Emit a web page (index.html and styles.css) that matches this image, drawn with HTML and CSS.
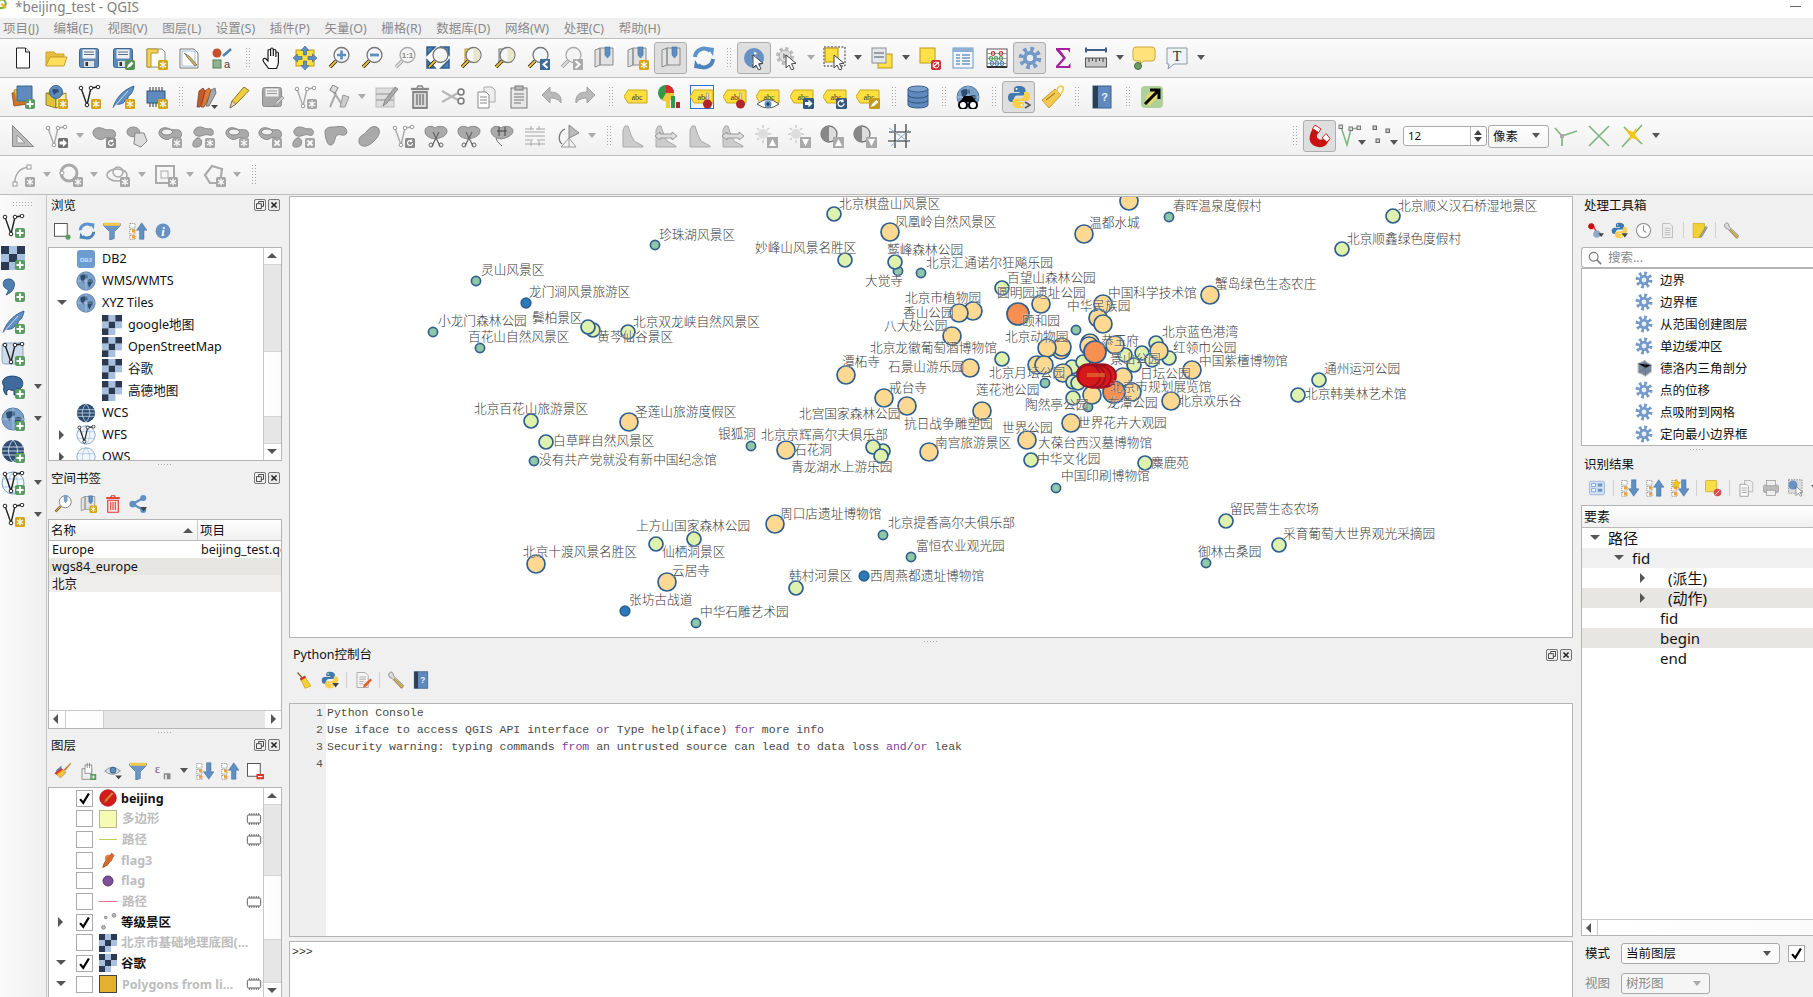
FILE: index.html
```html
<!DOCTYPE html>
<html lang="zh-CN">
<head>
<meta charset="utf-8">
<title>*beijing_test - QGIS</title>
<link rel="stylesheet" href="styles.css">
</head>
<body>
<svg class="defs" aria-hidden="true">
<defs>
<!-- badges: drawn in the lower right corner of a 24 box -->
<symbol id="bS" viewBox="0 0 24 24"><rect x="14" y="14" width="10" height="10" rx="1.5" fill="#d4a617"/><path d="M19 15.5v7M16 17l6 4M22 17l-6 4" stroke="#fff" stroke-width="1.2"/></symbol>
<symbol id="bP" viewBox="0 0 24 24"><rect x="14" y="14" width="10" height="10" rx="2" fill="#5a9a63"/><path d="M19 15.5v7M15.5 19h7" stroke="#fff" stroke-width="2"/></symbol>
<symbol id="gS" viewBox="0 0 24 24"><rect x="14" y="14" width="10" height="10" rx="1.5" fill="#a6a6a6"/><path d="M19 15.5v7M16 17l6 4M22 17l-6 4" stroke="#fff" stroke-width="1.2"/></symbol>
<symbol id="gX" viewBox="0 0 24 24"><rect x="14" y="14" width="10" height="10" rx="1.5" fill="#a6a6a6"/><path d="M16.5 16.5l5 5M21.5 16.5l-5 5" stroke="#fff" stroke-width="1.8"/></symbol>
<symbol id="gR" viewBox="0 0 24 24"><rect x="14" y="14" width="10" height="10" rx="1.5" fill="#8a8a8a"/><path d="M21.5 19a2.5 2.5 0 1 1-1-2M20 15.5l.8 1.7-1.8.5" fill="none" stroke="#fff" stroke-width="1.2"/></symbol>
<symbol id="gA" viewBox="0 0 24 24"><rect x="14" y="14" width="10" height="10" rx="1.5" fill="#6f6f6f"/><path d="M15.5 17.5h3.500v-2.500l4 4-4 4v-2.500h-3.500z" fill="#fff"/></symbol>
<!-- project -->
<symbol id="new" viewBox="0 0 24 24"><path d="M5.500 2h9l4 4v16h-13z" fill="#fff" stroke="#222"/><path d="M14.500 2v4h4" fill="#eee" stroke="#222"/></symbol>
<symbol id="open" viewBox="0 0 24 24"><path d="M2 20V6h8l2 2h8v3H6l-4 9z" fill="#e9bf3c" stroke="#caa02c"/><path d="M2 20l4-9h17l-3 9z" fill="#ffde5c" stroke="#caa02c"/></symbol>
<symbol id="save" viewBox="0 0 24 24"><rect x="2.500" y="2.500" width="19" height="19" rx="2" fill="#5f89b5" stroke="#3f668f"/><rect x="5.500" y="3.500" width="13" height="9" fill="#eef1f4"/><path d="M7 6h10M7 8.500h10" stroke="#5a6f86"/><rect x="7" y="15" width="10" height="6" fill="#dfe3e7"/><rect x="8.500" y="16" width="2.500" height="4" fill="#333"/></symbol>
<symbol id="pen" viewBox="0 0 24 24"><rect x="14" y="14" width="10" height="10" rx="2" fill="#53914f"/><path d="M16 22l1-3 3.500-3.500 2 2L19 21z" fill="#fff"/></symbol>
<symbol id="layout" viewBox="0 0 24 24"><path d="M3 3h15l3 3v15H3z" fill="#fff" stroke="#888"/><path d="M3 3h11v4H7v14H3z" fill="#f2d25a" stroke="#b9962c"/></symbol>
<symbol id="mgr" viewBox="0 0 24 24"><path d="M3 3h14l4 4v15H3z" fill="#fff" stroke="#777"/><rect x="5" y="5" width="13" height="15" fill="none" stroke="#a8bdd8"/><path d="M7 7l2 2 1 2 8 9 2-1-8-9-2-1z" fill="#d6b34f" stroke="#666" stroke-width=".8"/></symbol>
<symbol id="style" viewBox="0 0 24 24"><circle cx="7" cy="7" r="4.500" fill="#c4502c"/><path d="M13 10l8-7" stroke="#4f82b8" stroke-width="2.600"/><rect x="3" y="14" width="8" height="8" fill="#8db48f" stroke="#55805a"/><text x="14" y="22" class="ic-t">a</text></symbol>
<symbol id="hand" viewBox="0 0 24 24"><path d="M8.500 22.500C6.500 19 3 16.500 3 14c0-2 2.300-2 3.200-1L8 15V5c0-2 2.600-2 2.600 0v5V3.500c0-2 2.700-2 2.700 0V10V5c0-2 2.600-2 2.600 0v6V7.500c0-2 2.500-2 2.500 0V16c0 3-1 4.500-2 6.500z" fill="#fff" stroke="#1c1c1c" stroke-width="1.200"/></symbol>
<symbol id="panto" viewBox="0 0 24 24"><rect x="3" y="4" width="18" height="16" fill="#ffdf3f" stroke="#b99a18"/><path d="M12 0l4 4.500h-2.500V9h-3V4.500H8zM12 24l4-4.500h-2.500V15h-3v4.500H8zM0 12l4.500-4v2.500H9v3H4.500V16zM24 12l-4.500-4v2.500H15v3h4.500V16z" fill="#5d8fc0" stroke="#37638f" stroke-width=".6"/></symbol>
<symbol id="lens" viewBox="0 0 24 24"><path d="M9 15l-6 6" stroke="#222" stroke-width="3.600"/><path d="M9 15l-6 6" stroke="#f2c230" stroke-width="1.800"/><circle cx="14.500" cy="9" r="7.500" fill="#f4f6f8" stroke="#777" stroke-width="1.300"/></symbol>
<symbol id="glens" viewBox="0 0 24 24"><path d="M9 15l-6 6" stroke="#999" stroke-width="3.600"/><path d="M9 15l-6 6" stroke="#ddd" stroke-width="1.800"/><circle cx="14.500" cy="9" r="7.500" fill="#f4f4f4" stroke="#aaa" stroke-width="1.300"/></symbol>
<symbol id="zp" viewBox="0 0 24 24"><path d="M14.500 4.500v9M10 9h9" stroke="#5d8fc0" stroke-width="2.600"/></symbol>
<symbol id="zm" viewBox="0 0 24 24"><path d="M10 9h9" stroke="#5d8fc0" stroke-width="2.800"/></symbol>
<symbol id="zfull" viewBox="0 0 24 24"><rect x="1" y="1" width="22" height="21" fill="#fff"/><path d="M1 1h8L1 9zM23 1h-8l8 8zM1 22h8l-8-8zM23 22h-8l8-8z" fill="#4d82b6" stroke="#2f5f8f" stroke-width="1.500"/></symbol>
<symbol id="half" viewBox="0 0 24 24"><path d="M14.500 2a7 7 0 0 1 0 14z" fill="#e8e6c8"/></symbol>
<symbol id="bL" viewBox="0 0 24 24"><rect x="14" y="13" width="10" height="11" fill="#3d6b9c"/><path d="M21.500 15l-4 3.500 4 3.500" fill="none" stroke="#fff" stroke-width="2"/></symbol>
<symbol id="bR" viewBox="0 0 24 24"><rect x="14" y="13" width="10" height="11" fill="#aaa"/><path d="M16.500 15l4 3.500-4 3.500" fill="none" stroke="#fff" stroke-width="2"/></symbol>
<symbol id="book" viewBox="0 0 24 24"><path d="M3 4l5-2v17l-5 2zM8 2h13v17H8z" fill="#e2e2e2" stroke="#8a8a8a"/><path d="M13 1h5v8l-2.500 3L13 9z" fill="#5d8fc0" stroke="#3d6b9c" stroke-width=".6"/></symbol>
<symbol id="refresh" viewBox="0 0 24 24"><path d="M3 11a9 9 0 0 1 15-6" fill="none" stroke="#5d94cc" stroke-width="4"/><path d="M15 1l7 1-1 8z" fill="#5d94cc"/><path d="M21 13a9 9 0 0 1-15 6" fill="none" stroke="#4d84bc" stroke-width="4"/><path d="M9 23l-7-1 1-8z" fill="#4d84bc"/></symbol>
<symbol id="info" viewBox="0 0 24 24"><circle cx="12" cy="12" r="10" fill="#6792c3"/><text x="12" y="18" class="ic-i">i</text></symbol>
<symbol id="cur" viewBox="0 0 24 24"><path d="M11 9l0 13 3-3 2.500 5 2.500-1.200-2.500-5 4.500-.5z" fill="#fff" stroke="#333" stroke-width=".9"/></symbol>
<symbol id="ggear" viewBox="0 0 24 24"><circle cx="10" cy="10" r="7" fill="none" stroke="#bbb" stroke-width="4" stroke-dasharray="3 2.500"/><circle cx="10" cy="10" r="6" fill="#ddd" stroke="#aaa"/><path d="M8 7l5 3-5 3z" fill="#999"/></symbol>
<symbol id="sel" viewBox="0 0 24 24"><rect x="1" y="1" width="21" height="19" fill="none" stroke="#333" stroke-dasharray="2 1.500"/><rect x="2" y="2" width="13" height="14" fill="#ffdf3f" stroke="#a88f1d"/></symbol>
<symbol id="form" viewBox="0 0 24 24"><rect x="8" y="8" width="14" height="14" fill="#ffe04a" stroke="#b99a18"/><rect x="2" y="2" width="14" height="15" fill="#e5e7ea" stroke="#8a8f96"/><path d="M4 7h10M4 11h10" stroke="#7d8690" stroke-width="1.500"/></symbol>
<symbol id="desel" viewBox="0 0 24 24"><rect x="2" y="2" width="15" height="15" fill="#ffe04a" stroke="#b99a18"/><rect x="13" y="14" width="10" height="10" rx="2" fill="#d3262e"/><path d="M15 21l6-5" stroke="#fff" stroke-width="1.500"/><circle cx="18" cy="19" r="3" fill="none" stroke="#fff"/></symbol>
<symbol id="table" viewBox="0 0 24 24"><rect x="2" y="2" width="20" height="20" fill="#f4f7fb" stroke="#6d97c4"/><rect x="2" y="2" width="20" height="4" fill="#8fb0d4"/><path d="M5 9h4M11 9h8M5 12h4M11 12h8M5 15h4M11 15h8M5 18h4M11 18h8" stroke="#6d97c4" stroke-width="1.500"/></symbol>
<symbol id="calc" viewBox="0 0 24 24"><rect x="2" y="3" width="20" height="18" fill="#fff" stroke="#555"/><path d="M2 21h20" stroke="#333" stroke-width="2"/><path d="M2 7.500h20M2 12.500h20M2 17.500h20" stroke="#888" stroke-width=".8"/><g fill="none" stroke-width="1.200"><circle cx="8" cy="7.500" r="1.800" stroke="#c23b3b"/><circle cx="16" cy="7.500" r="1.800" stroke="#c23b3b"/><circle cx="6" cy="12.500" r="1.800" stroke="#4f9a5b"/><circle cx="11" cy="12.500" r="1.800" stroke="#4f9a5b"/><circle cx="16" cy="12.500" r="1.800" stroke="#4f9a5b"/><circle cx="7" cy="17.500" r="1.800" stroke="#4f82b8"/><circle cx="12" cy="17.500" r="1.800" stroke="#4f82b8"/><circle cx="17" cy="17.500" r="1.800" stroke="#4f82b8"/></g></symbol>
<symbol id="gear" viewBox="0 0 24 24"><circle cx="12" cy="12" r="8.800" fill="none" stroke="#7399cb" stroke-width="5" stroke-dasharray="3.500 3.410"/><circle cx="12" cy="12" r="7" fill="#7399cb"/><circle cx="12" cy="12" r="3.200" fill="#e8eef6"/></symbol>
<symbol id="sum" viewBox="0 0 24 24"><path d="M5 2h14v5l-2-3H9l6 8-7 8h9l2.500-3v5H5v-2l7-8-7-8z" fill="#a6209e"/></symbol>
<symbol id="meas" viewBox="0 0 24 24"><path d="M2 4h20M2 1.500v5M22 1.500v5" stroke="#3d5f85" stroke-width="2"/><rect x="1.500" y="12" width="21" height="9" fill="#c9c9c9" stroke="#555"/><path d="M5 12v4M8.500 12v3M12 12v4M15.500 12v3M19 12v4" stroke="#444"/></symbol>
<symbol id="tip" viewBox="0 0 24 24"><path d="M4 1h16q3 0 3 3v8q0 3-3 3H12l-4 3 .5-3H4q-3 0-3-3V4q0-3 3-3z" fill="#ffe27a" stroke="#c9a83a"/><circle cx="6" cy="20" r="3.500" fill="#6a9c62" stroke="#4b6e46"/></symbol>
<symbol id="txt" viewBox="0 0 24 24"><path d="M2 2h20v16H9l-6 5 1-5H2z" fill="#eef3f7" stroke="#89a"/><text x="12" y="15" class="ic-T">T</text></symbol>
<!-- row 2 -->
<symbol id="ds" viewBox="0 0 24 24"><path d="M1 8l13-2 2 13-13 2z" fill="#d2702f" stroke="#a55320"/><path d="M3 5l13-2 3 12-13 2z" fill="#f0c24b" stroke="#b99a18"/><path d="M6 1l15 0v15l-15 0z" fill="#5f89bf" stroke="#3f668f"/></symbol>
<symbol id="gpkg" viewBox="0 0 24 24"><path d="M2 8l9-4 10 4-9 4z" fill="#cdb033"/><path d="M2 8v12l10 3V12z" fill="#e0c23b" stroke="#7d6a17" stroke-width=".8"/><path d="M22 8v12l-10 3V12z" fill="#fff09a" stroke="#7d6a17" stroke-width=".8"/><circle cx="12" cy="7" r="6.500" fill="#5d8bbe" stroke="#3a6592"/><path d="M8 5c2-2 4 0 6-1l1 3-3 1-2 2z" fill="#2f4f74"/></symbol>
<symbol id="vv" viewBox="0 0 24 24"><path d="M4 3l6 17 4-17 7-1" fill="none" stroke="#222" stroke-width="1.400"/><g fill="#fff" stroke="#222"><circle cx="4" cy="3" r="1.800"/><circle cx="10" cy="20" r="1.800"/><circle cx="14" cy="3" r="1.800"/><circle cx="21" cy="2" r="1.800"/></g></symbol>
<symbol id="gv" viewBox="0 0 24 24"><path d="M4 4l6 17 4-17 7-1" fill="none" stroke="#aaa" stroke-width="1.400"/><g fill="#fff" stroke="#999"><circle cx="4" cy="4" r="1.800"/><circle cx="10" cy="21" r="1.800"/><circle cx="14" cy="4" r="1.800"/><circle cx="21" cy="3" r="1.800"/></g></symbol>
<symbol id="feather" viewBox="0 0 24 24"><path d="M2 23c2-8 9-18 21-22-1 6-3 9-6 10 1 2-1 4-3 4 0 3-5 5-9 4z" fill="#5f8fc3" stroke="#335f8f" stroke-width=".9"/><path d="M2 23L17 6" stroke="#e7eef6" stroke-width=".8"/></symbol>
<symbol id="chip" viewBox="0 0 24 24"><rect x="3" y="6" width="18" height="12" fill="#5f89bf" stroke="#33577f"/><path d="M6 2v4M9 2v4M12 2v4M15 2v4M18 2v4M6 18v4M9 18v4M12 18v4M15 18v4" stroke="#333"/></symbol>
<symbol id="mchip" viewBox="0 0 24 24"><rect x="2" y="6" width="20" height="12" rx="2" fill="#fff" stroke="#555" stroke-width="1.400"/><path d="M5 3v3M8.500 3v3M12 3v3M15.500 3v3M19 3v3M5 18v3M8.500 18v3M12 18v3M15.500 18v3M19 18v3" stroke="#555" stroke-width="1.200"/></symbol>
<symbol id="pens" viewBox="0 0 24 24"><path d="M3 22l2-16 4-3 3 4-6 15z" fill="#c8572a" stroke="#6c3a20" stroke-width=".7"/><path d="M7 22l4-16 4-3 3 4-8 15z" fill="#e07a32" stroke="#6c3a20" stroke-width=".7"/><path d="M12 21l5-16 4-2 1 5-7 13z" fill="#a8a8a8" stroke="#555" stroke-width=".7"/><path d="M17 20h7l-3.500 4z" fill="#444"/></symbol>
<symbol id="pencil" viewBox="0 0 24 24"><path d="M3 23l2-7L17 2l5 3.500L9 19z" fill="#f2cf3a" stroke="#8a7a2a"/><path d="M3 23l2-7 4 3z" fill="#e8d7b0" stroke="#666" stroke-width=".7"/></symbol>
<symbol id="gsave" viewBox="0 0 24 24"><rect x="2.500" y="2.500" width="19" height="19" rx="2" fill="#a8a8a8" stroke="#8c8c8c"/><rect x="5.500" y="3.500" width="13" height="8" fill="#eee"/><path d="M7 6h10M7 8.500h10" stroke="#999"/><path d="M14 21l2-4 6-6 2 2-6 6z" fill="#ccc" stroke="#888" stroke-width=".7"/></symbol>
<symbol id="tools" viewBox="0 0 24 24"><path d="M3 22L9 8M4 3l12 18" stroke="#aaa" stroke-width="2"/><rect x="4" y="1" width="6" height="6" transform="rotate(30 7 4)" fill="#ddd" stroke="#888"/><path d="M13 22l3-12 6 2-4 10z" fill="#ccc" stroke="#999"/></symbol>
<symbol id="gtab" viewBox="0 0 24 24"><rect x="2" y="3" width="18" height="19" fill="#ddd" stroke="#bbb"/><path d="M2 9h18M2 15h18" stroke="#aaa" stroke-width="1.500"/><path d="M9 21l2-6L21 2l3 2L13 18z" fill="#aaa" stroke="#777" stroke-width=".7"/></symbol>
<symbol id="trash" viewBox="0 0 24 24"><path d="M9 3l1-2h4l1 2" fill="none" stroke="#888" stroke-width="1.500"/><path d="M3 4h18" stroke="#888" stroke-width="2.400"/><path d="M5 7h14v16H5z" fill="#d8d8d8" stroke="#666" stroke-width="1.300"/><path d="M9 9v11M12 9v11M15 9v11" stroke="#777" stroke-width="1.400"/></symbol>
<symbol id="rtrash" viewBox="0 0 24 24"><path d="M9 3l1-2h4l1 2" fill="none" stroke="#d33" stroke-width="1.500"/><path d="M3 4h18" stroke="#d33" stroke-width="2.400"/><path d="M5 7h14v16H5z" fill="#fbe8e8" stroke="#d33" stroke-width="1.500"/><path d="M9 9v11M12 9v11M15 9v11" stroke="#d33" stroke-width="1.400"/></symbol>
<symbol id="sciss" viewBox="0 0 24 24"><path d="M1 6l16 9M1 17l16-9" stroke="#b8b8b8" stroke-width="2.200"/><circle cx="20" cy="7" r="3" fill="none" stroke="#777" stroke-width="1.500"/><circle cx="20" cy="16" r="3" fill="none" stroke="#777" stroke-width="1.500"/></symbol>
<symbol id="copy" viewBox="0 0 24 24"><path d="M10 2h8l3 3v12H10z" fill="#eee" stroke="#aaa"/><path d="M4 7h8l3 3v13H4z" fill="#fff" stroke="#888"/><path d="M6 12h7M6 15h7M6 18h7" stroke="#888"/></symbol>
<symbol id="paste" viewBox="0 0 24 24"><rect x="4" y="3" width="16" height="20" fill="#e8e8e8" stroke="#777"/><rect x="8" y="1" width="8" height="4" fill="#bbb" stroke="#777"/><path d="M7 9h10M7 12h10M7 15h10M7 18h7" stroke="#777"/></symbol>
<symbol id="undo" viewBox="0 0 24 24"><path d="M2 10l8-8v5c7 0 12 3 11 11-2-3-5-5-11-5v5z" fill="#b9b9b9" stroke="#a2a2a2"/></symbol>
<symbol id="redo" viewBox="0 0 24 24"><path d="M22 10l-8-8v5C7 7 2 10 3 18c2-3 5-5 11-5v5z" fill="#b9b9b9" stroke="#a2a2a2"/></symbol>
<symbol id="tag" viewBox="0 0 24 24"><path d="M4 5h19v13H4L0 11.500z" fill="#ffdf3f" stroke="#c9a81e"/><text x="13" y="15" class="ic-l">abc</text></symbol>
<symbol id="pie" viewBox="0 0 24 24"><circle cx="9" cy="8" r="8" fill="#2f9a49"/><path d="M9 8V0a8 8 0 0 1 8 8z" fill="#d92b2b"/><path d="M9 8h8a8 8 0 0 1-12 7z" fill="#f0c93a"/><rect x="9" y="15" width="4" height="8" fill="#f0c93a"/><rect x="14" y="11" width="4" height="12" fill="#2f9a49"/><rect x="19" y="17" width="4" height="6" fill="#a82b2b"/></symbol>
<symbol id="pin" viewBox="0 0 24 24"><rect x="16.500" y="8" width="2" height="9" fill="#ddd" stroke="#888" stroke-width=".5"/><circle cx="17.500" cy="19" r="4.500" fill="#b0242a"/></symbol>
<symbol id="eye" viewBox="0 0 24 24"><path d="M1 19q11-9 22 0-11 8-22 0z" fill="#fff" stroke="#555"/><circle cx="12" cy="19" r="3.500" fill="#5d8fc0"/><circle cx="12" cy="19" r="1.500" fill="#1c3752"/></symbol>
<symbol id="bA" viewBox="0 0 24 24"><rect x="13" y="13" width="11" height="11" rx="1.500" fill="#34597f"/><path d="M15 17h3.500v-2.500l4 4-4 4V20H15z" fill="#fff"/></symbol>
<symbol id="bO" viewBox="0 0 24 24"><rect x="13" y="13" width="11" height="11" rx="1.500" fill="#34597f"/><path d="M21 18.500a3 3 0 1 1-1.200-2.400M19.500 14.500l.6 2-2 .4" fill="none" stroke="#fff" stroke-width="1.300"/></symbol>
<symbol id="bK" viewBox="0 0 24 24"><rect x="13" y="13" width="11" height="11" rx="1.500" fill="#c29a1e"/><path d="M15 22l1-3 4.500-4 2 2-4.500 4z" fill="#fff"/></symbol>
<symbol id="dbc" viewBox="0 0 24 24"><path d="M2 4v16c0 4 20 4 20 0V4z" fill="#5f89bf" stroke="#3a5f88"/><ellipse cx="12" cy="4" rx="10" ry="3" fill="#7aa0cd" stroke="#3a5f88"/><path d="M2 10c0 4 20 4 20 0M2 15c0 4 20 4 20 0" fill="none" stroke="#2f5277"/></symbol>
<symbol id="globe" viewBox="0 0 24 24"><circle cx="12" cy="12" r="11" fill="#7ba0c8" stroke="#5a7ea6"/><path d="M5 6c3-3 6-1 8-2l1 4-4 2-1 4-3-3zM14 11c3-2 6-1 7 1l-3 4-2 4-2-5z" fill="#2e4d70"/><path d="M1 12h22M12 1v22" stroke="#c9dcf0" stroke-width=".6"/></symbol>
<symbol id="binoc" viewBox="0 0 24 24"><circle cx="7" cy="20" r="4" fill="#fff" stroke="#000" stroke-width="2"/><circle cx="17" cy="20" r="4" fill="#fff" stroke="#000" stroke-width="2"/><path d="M4 17l4-6h8l4 6z" fill="#000"/></symbol>
<symbol id="py" viewBox="0 0 24 24"><path d="M12 1C7 1 7 3 7 5v2h5.500v1H5C2 8 1 10 1 12.500S2 17 5 17h2v-3c0-2 1.500-3.500 3.500-3.500h5c2 0 3-1 3-3V5c0-2-2-4-6.500-4z" fill="#3f79ad"/><path d="M12 23c5 0 5-2 5-4v-2h-5.500v-1H19c3 0 4-2 4-4.500S22 7 19 7h-2v3c0 2-1.500 3.500-3.500 3.500h-5c-2 0-3 1-3 3V19c0 2 2 4 6.500 4z" fill="#f7cf4a"/><circle cx="9.500" cy="4" r="1" fill="#fff"/><circle cx="14.500" cy="20" r="1" fill="#fff"/></symbol>
<symbol id="prompt" viewBox="0 0 24 24"><path d="M18 17l5 3-5 3" fill="none" stroke="#555" stroke-width="1.500"/></symbol>
<symbol id="ytag" viewBox="0 0 24 24"><path d="M2 15L15 4l6 6L9 23z" fill="#f2c94c" stroke="#c9a030"/><path d="M6 15l9-7" stroke="#8a7020"/><path d="M18 8c-2-3 0-7 3-7s3 5 0 7" fill="none" stroke="#f2c94c" stroke-width="1.600"/></symbol>
<symbol id="help" viewBox="0 0 24 24"><rect x="3" y="1" width="18" height="22" fill="#5f89bf" stroke="#3a5f88"/><rect x="3" y="1" width="5" height="22" fill="#2b3f55"/><text x="14.500" y="16" class="ic-q">?</text></symbol>
<symbol id="arrow" viewBox="0 0 24 24"><rect x="1" y="1" width="22" height="22" rx="4" fill="#afd09a"/><path d="M6 15l3 6 7-7 4-8-6-2-8 7z" fill="#e8d76b"/><path d="M5 19L18 6M10 5h9v9" fill="none" stroke="#000" stroke-width="3"/></symbol>
<!-- row 3 -->
<symbol id="ang" viewBox="0 0 24 24"><path d="M1.500 1.500L22.500 22.500H1.500z" fill="#bbb" stroke="#888"/><path d="M6 11l8 8H6z" fill="#f0f0f0" stroke="#999"/></symbol>
<symbol id="blob" viewBox="0 0 24 24"><path d="M1 8c1-5 7-5 11-3s9-1 11 3-1 7-4 6-5-1-8 1-11-2-10-7z" fill="#aaa" stroke="#8a8a8a"/></symbol>
<symbol id="blobh" viewBox="0 0 24 24"><path d="M1 8c1-5 7-5 11-3s9-1 11 3-1 7-4 6-5-1-8 1-11-2-10-7z" fill="#aaa" stroke="#8a8a8a"/><ellipse cx="9" cy="8" rx="5.500" ry="3" fill="#f0f0f0" stroke="#8a8a8a"/></symbol>
<symbol id="blob2" viewBox="0 0 24 24"><path d="M3 7c1-4 6-5 10-3s8-1 9 3-1 5-4 4-5 0-8 1-8-1-7-5z" fill="#aaa" stroke="#8a8a8a"/><path d="M2 22c-1-4 3-9 6-8s3 5 2 7-7 3-8 1z" fill="#aaa" stroke="#8a8a8a"/></symbol>
<symbol id="bpoly" viewBox="0 0 24 24"><path d="M2 8c0-5 7-6 10-4s4 4 1 7-11 2-11-3z" fill="#aaa" stroke="#8a8a8a"/><path d="M10 9l9 0 3 8-6 6-7-3z" fill="#ddd" stroke="#888"/></symbol>
<symbol id="bshape" viewBox="0 0 24 24"><path d="M1 8c0-4 4-5 8-5s11-2 13 2 0 7-4 6-6 0-7 4-2 6-5 6-5-9-5-13z" fill="#aaa" stroke="#8a8a8a"/></symbol>
<symbol id="bslant" viewBox="0 0 24 24"><path d="M2 16C2 12 7 11 10 7s8-6 11-3 1 8-3 12-8 7-12 6-4-3-4-6z" fill="#aaa" stroke="#8a8a8a"/></symbol>
<symbol id="scb" viewBox="0 0 24 24"><path d="M1 7c0-5 7-6 10-3 3-3 12-2 12 3 0 5-6 7-12 8C5 14 1 12 1 7z" fill="#aaa" stroke="#8a8a8a"/><path d="M8 22L15 8M16 22L9 8" stroke="#666" stroke-width="1.200"/><circle cx="7" cy="21" r="2" fill="none" stroke="#666"/><circle cx="17" cy="21" r="2" fill="none" stroke="#666"/></symbol>
<symbol id="merge" viewBox="0 0 24 24"><path d="M1 7c0-5 7-6 10-3 3-3 12-2 12 3 0 4-6 7-12 8C5 14 1 11 1 7z" fill="#aaa" stroke="#8a8a8a"/><path d="M9 3v9M15 3v9M7 7h10" stroke="#444"/><path d="M6 14c1 4 4 6 6 8" fill="none" stroke="#666"/></symbol>
<symbol id="align" viewBox="0 0 24 24"><path d="M2 5h9M13 5h9M2 8h20M2 12h20M2 16h8M14 16h8M2 20h20M8 2v4M16 2v4M8 17v5M16 17v5" stroke="#a5a5a5"/></symbol>
<symbol id="rotp" viewBox="0 0 24 24"><path d="M13 1l10 8-10 5z" fill="#bbb" stroke="#888"/><path d="M13 14v9M5 23l8-9 7 9z" fill="none" stroke="#999"/><path d="M9 5c-7 3-7 12-3 15" fill="none" stroke="#777" stroke-width="1.300"/></symbol>
<symbol id="hist" viewBox="0 0 24 24"><path d="M2 23V6l2-4 3 0 3 9 3 6 9 5v1z" fill="#ccc" stroke="#aaa"/></symbol>
<symbol id="hista" viewBox="0 0 24 24"><path d="M2 23V6l2-4 3 0 3 9 3 6 9 5v1z" fill="#ccc" stroke="#aaa"/><path d="M1 12l5-4v2h12V8l5 4-5 4v-2H6v2z" fill="#ddd" stroke="#999"/></symbol>
<symbol id="sun" viewBox="0 0 24 24"><circle cx="9" cy="10" r="5" fill="#ddd"/><path d="M9 1v3M9 16v3M1 10h3M14 10h3M3 4l2 2M15 4l-2 2M3 16l2-2" stroke="#ccc" stroke-width="1.500"/></symbol>
<symbol id="cont" viewBox="0 0 24 24"><circle cx="9" cy="10" r="8" fill="#ddd" stroke="#777" stroke-width="1.300"/><path d="M9 2a8 8 0 0 0 0 16z" fill="#888"/></symbol>
<symbol id="bU" viewBox="0 0 24 24"><rect x="13" y="13" width="11" height="11" fill="#aaa"/><path d="M18.500 15l3.500 7h-7z" fill="#fff"/></symbol>
<symbol id="bD" viewBox="0 0 24 24"><rect x="13" y="13" width="11" height="11" fill="#aaa"/><path d="M18.500 22l3.500-7h-7z" fill="#fff"/></symbol>
<symbol id="mesh" viewBox="0 0 24 24"><path d="M2 8h22M1 17h22M8 0v24M19 0v24" stroke="#222" stroke-width="1.100"/><path d="M2 4l20 14M4 22L22 6" stroke="#8fb0d4"/></symbol>
<symbol id="arc" viewBox="0 0 24 24"><path d="M4 22C3 12 8 5 18 4" fill="none" stroke="#aaa" stroke-width="1.500"/><rect x="2" y="19" width="4" height="4" fill="#fff" stroke="#999"/><rect x="16" y="2" width="4" height="4" fill="#fff" stroke="#999"/></symbol>
<symbol id="ring" viewBox="0 0 24 24"><circle cx="10" cy="10" r="8" fill="none" stroke="#aaa" stroke-width="3"/><circle cx="3" cy="10" r="2" fill="#fff" stroke="#999"/></symbol>
<symbol id="elli" viewBox="0 0 24 24"><ellipse cx="11" cy="12" rx="10" ry="6" fill="none" stroke="#aaa" stroke-width="1.500"/><circle cx="12" cy="9" r="5" fill="none" stroke="#aaa" stroke-width="1.500"/></symbol>
<symbol id="rect" viewBox="0 0 24 24"><rect x="2" y="3" width="18" height="17" fill="none" stroke="#aaa" stroke-width="2"/><rect x="7" y="8" width="7" height="7" fill="none" stroke="#aaa"/></symbol>
<symbol id="poly" viewBox="0 0 24 24"><path d="M3 12L10 3l10 3-2 14H8z" fill="none" stroke="#aaa" stroke-width="2.200"/></symbol>
<!-- snapping -->
<symbol id="magnet" viewBox="0 0 24 24"><path d="M8 1l6 4-4 6c-1 3 3 6 6 4l4-5 3 5-4 6c-5 4-12 2-15-2S3 8 8 1z" fill="#c91010"/><path d="M8 1l6 4-2.500 3.500-6-4zM19 9.500l4 5-3 3.500-5-4z" fill="#fff" stroke="#c91010" stroke-width=".8"/></symbol>
<symbol id="snapv" viewBox="0 0 24 24"><path d="M3 3l6 18 4-16 8-1" fill="none" stroke="#7fb57f" stroke-width="1.500"/><g fill="#ddd" stroke="#777"><rect x="1" y="1" width="3.500" height="3.500"/><rect x="11" y="3" width="3.500" height="3.500"/><rect x="19" y="2" width="3.500" height="3.500"/></g></symbol>
<symbol id="snapd" viewBox="0 0 24 24"><g fill="#ccc" stroke="#666"><rect x="3" y="2" width="3.500" height="3.500"/><rect x="16" y="5" width="3.500" height="3.500"/><rect x="6" y="15" width="3.500" height="3.500"/></g></symbol>
<symbol id="smid" viewBox="0 0 24 24"><path d="M8 22V12L1 4M8 12l15-5" fill="none" stroke="#7fb57f" stroke-width="1.700"/><rect x="6" y="10" width="4" height="4" fill="#aaa"/></symbol>
<symbol id="sx" viewBox="0 0 24 24"><path d="M2 2l20 20M22 2L2 22" stroke="#7fb57f" stroke-width="1.700"/></symbol>
<symbol id="syx" viewBox="0 0 24 24"><path d="M2 23L22 1M4 3l18 17" stroke="#7fb57f" stroke-width="1.700"/><path d="M5 5l8 3 4-5-2 8 5 6-8-3-3 3 1-5z" fill="#f5c518"/></symbol>
<!-- small tools -->
<symbol id="newc" viewBox="0 0 24 24"><rect x="2" y="2" width="17" height="17" fill="#fff" stroke="#555" stroke-width="1.300"/><circle cx="20" cy="20" r="3.500" fill="#5a9a63"/></symbol>
<symbol id="remc" viewBox="0 0 24 24"><rect x="2" y="2" width="17" height="17" fill="#fff" stroke="#555" stroke-width="1.300"/><rect x="14" y="16" width="10" height="7" fill="#d33"/><path d="M16 19.500h6" stroke="#fff" stroke-width="1.500"/></symbol>
<symbol id="funnel" viewBox="0 0 24 24"><path d="M1 2h22v3l-8 8v9l-6 2V13L1 5z" fill="#6d97c4" stroke="#4f769e"/><rect x="1" y="1" width="22" height="4" fill="#f2c94c"/></symbol>
<symbol id="coll" viewBox="0 0 24 24"><rect x="1" y="2" width="7" height="6" fill="#fff" stroke="#777" stroke-dasharray="1.500 1"/><rect x="1" y="10" width="7" height="6" fill="#fff" stroke="#777" stroke-dasharray="1.500 1"/><rect x="1" y="18" width="7" height="5" fill="#fff" stroke="#777" stroke-dasharray="1.500 1"/><rect x="4" y="10" width="4" height="4" fill="#f2a230"/><rect x="4" y="18" width="4" height="4" fill="#f2a230"/><path d="M10 11l7-10 7 10h-4v12h-6V11z" fill="#5f8fc3" stroke="#3a648f" stroke-width=".6"/></symbol>
<symbol id="expa" viewBox="0 0 24 24"><rect x="1" y="2" width="7" height="6" fill="#fff" stroke="#777" stroke-dasharray="1.500 1"/><rect x="1" y="10" width="7" height="6" fill="#fff" stroke="#777" stroke-dasharray="1.500 1"/><rect x="1" y="18" width="7" height="5" fill="#fff" stroke="#777" stroke-dasharray="1.500 1"/><rect x="4" y="10" width="4" height="4" fill="#f2a230"/><rect x="4" y="18" width="4" height="4" fill="#f2a230"/><path d="M10 13l7 10 7-10h-4V1h-6v12z" fill="#5f8fc3" stroke="#3a648f" stroke-width=".6"/></symbol>
<symbol id="zoomb" viewBox="0 0 24 24"><path d="M9 15l-7 7" stroke="#222" stroke-width="3"/><path d="M9 15l-7 7" stroke="#f2c230" stroke-width="1.500"/><circle cx="15" cy="9" r="8" fill="#fff" stroke="#666"/><path d="M13 0h5v8l-2.500 3L13 8z" fill="#7d9fc5"/></symbol>
<symbol id="share" viewBox="0 0 24 24"><path d="M5 12L19 4M5 12l14 8" stroke="#5f8fc3" stroke-width="3"/><circle cx="5" cy="12" r="4.500" fill="#5f8fc3"/><circle cx="19" cy="4" r="4" fill="#5f8fc3"/><circle cx="19" cy="20" r="4" fill="#5f8fc3"/><path d="M15 16h9l-4.500 6z" fill="#444"/></symbol>
<symbol id="brush" viewBox="0 0 24 24"><path d="M1 15l8-7 7 6-7 7z" fill="#f2c230" stroke="#a88"/><path d="M1 15l8-7 3 2-9 7z" fill="#d33"/><path d="M3 12l7-6" stroke="#4f82b8" stroke-width="2"/><path d="M13 10l9-9 1 1-8 10z" fill="#b58a3c"/></symbol>
<symbol id="addg" viewBox="0 0 24 24"><rect x="4" y="9" width="13" height="14" fill="#eee" stroke="#777"/><rect x="8" y="4" width="9" height="11" fill="#fff" stroke="#777"/><path d="M11 1v7M14 1v7" stroke="#777"/><rect x="15" y="16" width="8" height="8" fill="#5a9a63"/><path d="M19 17.500v5M16.500 20h5" stroke="#fff"/></symbol>
<symbol id="vis" viewBox="0 0 24 24"><path d="M1 12q10-10 21 0-11 9-21 0z" fill="#d8e4ef" stroke="#777"/><circle cx="12" cy="11" r="4" fill="#5d8fc0" stroke="#264a70"/><path d="M15 18h9l-4.500 5z" fill="#444"/></symbol>
<symbol id="expr" viewBox="0 0 24 24"><text x="1" y="15" class="ic-e">ε</text><rect x="13" y="15" width="9" height="8" fill="#888"/><rect x="15" y="17" width="2" height="6" fill="#fff"/></symbol>
<symbol id="clk" viewBox="0 0 24 24"><circle cx="12" cy="12" r="10" fill="#fff" stroke="#8a8a8a" stroke-width="1.500"/><path d="M12 5v7l4 3" fill="none" stroke="#8a8a8a" stroke-width="1.500"/></symbol>
<symbol id="doc" viewBox="0 0 24 24"><path d="M5 2h10l4 4v16H5z" fill="#eee" stroke="#aaa"/><path d="M8 9h8M8 12h8M8 15h8M8 18h8" stroke="#aaa"/></symbol>
<symbol id="note" viewBox="0 0 24 24"><path d="M3 2h16v12l-5 8H3z" fill="#f2d036" stroke="#c9a81e"/><path d="M12 21L21 6l2 2-8 13z" fill="#a5a5a5" stroke="#666" stroke-width=".7"/></symbol>
<symbol id="wrench" viewBox="0 0 24 24"><path d="M2 4l3-3 3 2 1 4 13 12-3 4L7 10 3 8z" fill="#dcdcdc" stroke="#777"/><path d="M10 10l12 11-2 2L9 12z" fill="#d6b34f" stroke="#8a7020" stroke-width=".7"/></symbol>
<symbol id="hammer" viewBox="0 0 24 24"><path d="M6 2l8 16 2-1-8-15z" fill="#d33"/><circle cx="6" cy="6" r="4" fill="#c91010" stroke="#c91010" stroke-dasharray="2 1"/><circle cx="14" cy="17" r="5" fill="#8fa8c9" stroke="#8fa8c9" stroke-dasharray="2 1"/><path d="M16 16h8l-4 5z" fill="#444"/></symbol>
<symbol id="pyd" viewBox="0 0 24 24"><use href="#py"/><path d="M15 16h9l-4.500 6z" fill="#444"/></symbol>
<symbol id="broom" viewBox="0 0 24 24"><path d="M2 2l8 9" stroke="#8a6a2a" stroke-width="2"/><path d="M6 11l6-3 8 12-8 3z" fill="#f2cf3a" stroke="#c9a81e"/><rect x="5" y="8" width="8" height="3" transform="rotate(-30 9 9)" fill="#c33"/></symbol>
<symbol id="edit" viewBox="0 0 24 24"><path d="M4 2h11l4 4v16H4z" fill="#f4f4f4" stroke="#999"/><path d="M7 8h9M7 11h9M7 14h6M7 17h5" stroke="#999"/><path d="M12 22l1-4 9-8 2 2-8 9z" fill="#e0622a"/></symbol>
<symbol id="exp2" viewBox="0 0 24 24"><rect x="2" y="3" width="20" height="18" rx="2" fill="#cfe0f2" stroke="#8fb0d4"/><rect x="5" y="6" width="5" height="4" fill="#fff" stroke="#6d97c4"/><rect x="13" y="6" width="6" height="4" fill="#6d97c4"/><rect x="5" y="13" width="5" height="4" fill="#fff" stroke="#6d97c4"/><rect x="13" y="13" width="6" height="4" fill="#6d97c4"/></symbol>
<symbol id="starx" viewBox="0 0 24 24"><use href="#expa"/><path d="M7 0l2 4 4 .5-3 3 .8 4.500L7 10l-3.800 2 .8-4.500-3-3 4-.5z" fill="#f5c518" stroke="#b08a10" stroke-width=".5"/></symbol>
<symbol id="ycl" viewBox="0 0 24 24"><rect x="2" y="2" width="15" height="15" rx="1" fill="#f7dc4f" stroke="#c9a81e"/><circle cx="18" cy="18" r="5" fill="#d84b4b"/><path d="M15 21l6-6" stroke="#fff"/></symbol>
<symbol id="prn" viewBox="0 0 24 24"><rect x="2" y="8" width="20" height="10" rx="2" fill="#bbb" stroke="#999"/><rect x="6" y="2" width="12" height="7" fill="#eee" stroke="#999"/><rect x="6" y="15" width="12" height="7" fill="#eee" stroke="#999"/></symbol>
<symbol id="idsel" viewBox="0 0 24 24"><rect x="2" y="1" width="18" height="18" fill="#ddd" stroke="#777" stroke-dasharray="2 1.500"/><circle cx="8" cy="8" r="6" fill="#6792c3"/><path d="M12 10v12l3-3 3 4 2-1-3-4 4-.5z" fill="#fff" stroke="#444" stroke-width=".7"/></symbol>
<symbol id="delaunay" viewBox="0 0 24 24"><path d="M4 6l9-4 9 6 0 9-8 6-10-5z" fill="#76899c" stroke="#c8c8c8" stroke-width="1.400"/><path d="M13 2l1 21M4 6l10 6 8-4M4 18l10-6" stroke="#5a6c7e" stroke-width=".7"/></symbol>
<symbol id="xyz" viewBox="0 0 24 24"><rect x="0" y="0" width="8" height="8" fill="#2b3a52"/><rect x="8" y="0" width="8" height="8" fill="#a8c0e0"/><rect x="16" y="0" width="8" height="8" fill="#2b3a52"/><rect x="0" y="8" width="8" height="8" fill="#a8c0e0"/><rect x="8" y="8" width="8" height="8" fill="#2b3a52"/><rect x="16" y="8" width="8" height="8" fill="#a8c0e0"/><rect x="0" y="16" width="8" height="8" fill="#2b3a52"/><rect x="8" y="16" width="8" height="8" fill="#a8c0e0"/></symbol>
<symbol id="wcs" viewBox="0 0 24 24"><circle cx="12" cy="12" r="11" fill="#2e4d70"/><path d="M2 8h20M1 12h22M2 16h20M12 1c-6 7-6 15 0 22M12 1c6 7 6 15 0 22" fill="none" stroke="#cfe0f2" stroke-width=".9"/></symbol>
<symbol id="wfs" viewBox="0 0 24 24"><circle cx="12" cy="12" r="11" fill="#f2f7fc" stroke="#7ba0c8"/><path d="M2 8h20M2 16h20M12 1c-6 7-6 15 0 22M12 1c6 7 6 15 0 22" fill="none" stroke="#9bbad8" stroke-width=".8"/></symbol>
<symbol id="flagi" viewBox="0 0 24 24"><path d="M5 22l2-6L17 3l3 3-9 13z" fill="#d96a2a" stroke="#8a3d18"/><circle cx="13" cy="10" r="5" fill="#d96a2a" opacity=".9"/></symbol>
<symbol id="beij" viewBox="0 0 24 24"><circle cx="12" cy="12" r="11" fill="#d7191c" stroke="#a3101c"/><path d="M6 19l2-5L17 4l3 2-10 11z" fill="#e07a32" stroke="#8a3d18" stroke-width=".7"/></symbol>
<symbol id="pts" viewBox="0 0 24 24"><circle cx="6" cy="19" r="2.500" fill="#bbb" stroke="#777"/><circle cx="9" cy="6" r="1.800" fill="#bbb" stroke="#777"/><circle cx="20" cy="3" r="2.500" fill="#bbb" stroke="#777"/></symbol>
<symbol id="tick" viewBox="0 0 24 24"><path d="M5 13l5 6 9-15" fill="none" stroke="#000" stroke-width="3.600"/></symbol>
<symbol id="fl" viewBox="0 0 14 14"><rect x=".5" y=".5" width="13" height="13" rx="2" fill="#f2f2f2" stroke="#555"/><rect x="5.500" y="3" width="5.500" height="5.500" fill="none" stroke="#333"/><rect x="3" y="5.500" width="5.500" height="5.500" fill="#f2f2f2" stroke="#333"/></symbol>
<symbol id="cl" viewBox="0 0 14 14"><rect x=".5" y=".5" width="13" height="13" rx="2" fill="#e8e8e8" stroke="#555"/><path d="M4 4l6 6M10 4l-6 6" stroke="#222" stroke-width="1.800"/></symbol>
<symbol id="mag" viewBox="0 0 16 16"><circle cx="6.500" cy="6.500" r="5" fill="none" stroke="#777" stroke-width="1.300"/><path d="M10 10l5 5" stroke="#777" stroke-width="1.800"/></symbol>
</defs>
</svg>

<div class="app">
<header class="titlebar">
  <svg class="logo" viewBox="0 0 24 24"><circle cx="8" cy="7" r="8" fill="none" stroke="#7cb342" stroke-width="4"/><path d="M8 7l8 8" stroke="#e8b52c" stroke-width="4"/></svg>
  <span class="title-text">*beijing_test - QGIS</span>
  <span class="win-min"></span>
</header>
<nav class="menubar">
  <span>项目(J)</span><span>编辑(E)</span><span>视图(V)</span><span>图层(L)</span><span>设置(S)</span><span>插件(P)</span><span>矢量(O)</span><span>栅格(R)</span><span>数据库(D)</span><span>网络(W)</span><span>处理(C)</span><span>帮助(H)</span>
</nav>

<div class="toolbar">
  <span class="b"><svg><use href="#new"/></svg></span><span class="b"><svg><use href="#open"/></svg></span><span class="b"><svg><use href="#save"/></svg></span><span class="b"><svg><use href="#save"/><use href="#pen"/></svg></span><span class="b"><svg><use href="#layout"/><use href="#bS"/></svg></span><span class="b"><svg><use href="#mgr"/></svg></span><span class="b"><svg><use href="#style"/></svg></span>
  <span class="g"></span>
  <span class="b"><svg><use href="#hand"/></svg></span><span class="b"><svg><use href="#panto"/></svg></span><span class="b"><svg><use href="#lens"/><use href="#zp"/></svg></span><span class="b"><svg><use href="#lens"/><use href="#zm"/></svg></span><span class="b"><svg><use href="#glens"/><text x="14.500" y="12" class="ic-11">1:1</text></svg></span><span class="b"><svg><use href="#zfull"/><use href="#lens"/></svg></span><span class="b"><svg><rect x="6" y="3" width="12" height="13" fill="#ffdf3f" stroke="#b99a18"/><use href="#lens"/><use href="#half"/></svg></span><span class="b"><svg><rect x="6" y="3" width="12" height="13" fill="#ddd" stroke="#777"/><use href="#lens"/><use href="#half"/></svg></span><span class="b"><svg><use href="#lens"/><use href="#bL"/></svg></span><span class="b"><svg><use href="#glens"/><use href="#bR"/></svg></span><span class="b"><svg><use href="#book"/></svg></span><span class="b"><svg><use href="#book"/><use href="#bS"/></svg></span><span class="b on"><svg><use href="#book"/></svg></span><span class="b"><svg><use href="#refresh"/></svg></span>
  <span class="g"></span>
  <span class="b on"><svg><use href="#info"/><use href="#cur"/></svg></span><span class="b"><svg><use href="#ggear"/><use href="#cur"/></svg></span><span class="dd off"></span><span class="b"><svg><use href="#sel"/><use href="#cur"/></svg></span><span class="dd"></span><span class="b"><svg><use href="#form"/></svg></span><span class="dd"></span><span class="b"><svg><use href="#desel"/></svg></span><span class="b"><svg><use href="#table"/></svg></span><span class="b"><svg><use href="#calc"/></svg></span><span class="b on"><svg><use href="#gear"/></svg></span><span class="b"><svg><use href="#sum"/></svg></span><span class="b"><svg><use href="#meas"/></svg></span><span class="dd"></span><span class="b"><svg><use href="#tip"/></svg></span><span class="b"><svg><use href="#txt"/></svg></span><span class="dd"></span>
</div>

<div class="toolbar">
  <span class="b"><svg><use href="#ds"/><use href="#bP"/></svg></span><span class="b"><svg><use href="#gpkg"/><use href="#bS"/></svg></span><span class="b"><svg><use href="#vv"/><use href="#bS"/></svg></span><span class="b"><svg><use href="#feather"/><use href="#bS"/></svg></span><span class="b"><svg><use href="#chip"/><use href="#bS"/></svg></span>
  <span class="g"></span>
  <span class="b"><svg><use href="#pens"/></svg></span><span class="b"><svg><use href="#pencil"/></svg></span><span class="b"><svg><use href="#gsave"/></svg></span><span class="b"><svg><use href="#gv"/><use href="#gS"/></svg></span><span class="b"><svg><use href="#tools"/></svg></span><span class="dd off"></span><span class="b"><svg><use href="#gtab"/></svg></span><span class="b"><svg><use href="#trash"/></svg></span><span class="b"><svg><use href="#sciss"/></svg></span><span class="b"><svg><use href="#copy"/></svg></span><span class="b"><svg><use href="#paste"/></svg></span><span class="b"><svg><use href="#undo"/></svg></span><span class="b"><svg><use href="#redo"/></svg></span>
  <span class="g"></span>
  <span class="b"><svg><use href="#tag"/></svg></span><span class="b"><svg><use href="#pie"/></svg></span><span class="b"><svg><rect x=".5" y=".5" width="23" height="23" fill="none" stroke="#2f6fd0"/><use href="#tag"/><use href="#pin"/></svg></span><span class="b"><svg><use href="#tag"/><use href="#pin"/></svg></span><span class="b"><svg><use href="#tag"/><use href="#eye"/></svg></span><span class="b"><svg><use href="#tag"/><use href="#bA"/></svg></span><span class="b"><svg><use href="#tag"/><use href="#bO"/></svg></span><span class="b"><svg><use href="#tag"/><use href="#bK"/></svg></span>
  <span class="g"></span>
  <span class="b"><svg><use href="#dbc"/></svg></span>
  <span class="g"></span>
  <span class="b"><svg><use href="#globe"/><use href="#binoc"/></svg></span>
  <span class="g"></span>
  <span class="b on"><svg><use href="#py"/><use href="#prompt"/></svg></span><span class="b"><svg><use href="#ytag"/></svg></span>
  <span class="g"></span>
  <span class="b"><svg><use href="#help"/></svg></span>
  <span class="g"></span>
  <span class="b"><svg><use href="#arrow"/></svg></span>
</div>

<div class="toolbar">
  <span class="b"><svg><use href="#ang"/></svg></span><span class="b"><svg><use href="#gv"/><use href="#gA"/></svg></span><span class="dd off"></span><span class="b"><svg><use href="#blob"/><use href="#gR"/></svg></span><span class="b"><svg><use href="#bpoly"/></svg></span><span class="b"><svg><use href="#blobh"/><use href="#gS"/></svg></span><span class="b"><svg><use href="#blob2"/><use href="#gS"/></svg></span><span class="b"><svg><use href="#blobh"/><use href="#gS"/></svg></span><span class="b"><svg><use href="#blobh"/><use href="#gX"/></svg></span><span class="b"><svg><use href="#blob2"/><use href="#gX"/></svg></span><span class="b"><svg><use href="#bshape"/></svg></span><span class="b"><svg><use href="#bslant"/></svg></span><span class="b"><svg><use href="#gv"/><use href="#gR"/></svg></span><span class="b"><svg><use href="#scb"/></svg></span><span class="b"><svg><use href="#scb"/></svg></span><span class="b"><svg><use href="#merge"/></svg></span><span class="b"><svg><use href="#align"/></svg></span><span class="b"><svg><use href="#rotp"/></svg></span><span class="dd off"></span>
  <span class="g"></span>
  <span class="b"><svg><use href="#hist"/></svg></span><span class="b"><svg><use href="#hista"/></svg></span><span class="b"><svg><use href="#hist"/></svg></span><span class="b"><svg><use href="#hista"/></svg></span><span class="b"><svg><use href="#sun"/><use href="#bU"/></svg></span><span class="b"><svg><use href="#sun"/><use href="#bD"/></svg></span><span class="b"><svg><use href="#cont"/><use href="#bU"/></svg></span><span class="b"><svg><use href="#cont"/><use href="#bD"/></svg></span><span class="b"><svg><use href="#mesh"/></svg></span>
  <span class="snapping">
    <span class="g"></span>
    <span class="b on"><svg><use href="#magnet"/></svg></span><span class="b narrow"><svg><use href="#snapv"/></svg></span><span class="dd sub"></span><span class="b narrow"><svg><use href="#snapd"/></svg></span><span class="dd sub"></span>
    <span class="spin"><span class="spin-val">12</span><span class="spin-btns"><span class="tri-up"></span><span class="tri-down"></span></span></span>
    <span class="combo unit">像素<span class="dd"></span></span>
    <span class="b"><svg><use href="#smid"/></svg></span><span class="b"><svg><use href="#sx"/></svg></span><span class="b"><svg><use href="#syx"/></svg></span><span class="dd"></span>
  </span>
</div>

<div class="toolbar">
  <span class="b"><svg><use href="#arc"/><use href="#gS"/></svg></span><span class="dd off"></span><span class="b"><svg><use href="#ring"/><use href="#gS"/></svg></span><span class="dd off"></span><span class="b"><svg><use href="#elli"/><use href="#gS"/></svg></span><span class="dd off"></span><span class="b"><svg><use href="#rect"/><use href="#gS"/></svg></span><span class="dd off"></span><span class="b"><svg><use href="#poly"/><use href="#gS"/></svg></span><span class="dd off"></span>
  <span class="g"></span>
</div>

<main class="workspace">
  <aside class="vbar">
    <span class="hgrip"></span>
    <span class="vr"><svg><use href="#vv"/><use href="#bP"/></svg></span>
    <span class="vr"><svg><use href="#xyz"/><use href="#bP"/></svg></span>
    <span class="vr"><svg><path d="M4 2c6-3 11 1 9 7-1 4-4 6-8 8 2-3 3-5 1-6C2 10 1 4 4 2z" fill="#4f7faf" stroke="#2f5f8f"/><use href="#bP"/></svg></span>
    <span class="vr"><svg><use href="#feather"/><use href="#bP"/></svg></span>
    <span class="vr"><svg><rect x="1" y="1" width="21" height="21" rx="3" fill="#cddbea" stroke="#8fa8c4"/><use href="#vv"/><use href="#bP"/></svg></span>
    <span class="vr"><svg><path d="M4 3c5-3 11-2 15 0 4 3 3 8 1 10-1 1-3 1-4 0v7h-3v-5c-2 1-4 0-5-1-2 1-3 3-2 6-3-1-4-5-3-9-2-2-2-6 1-8z" fill="#3e6a9c" stroke="#24466c"/><use href="#bP"/></svg><span class="dd"></span></span>
    <span class="vr"><svg><use href="#globe"/><use href="#bP"/></svg><span class="dd"></span></span>
    <span class="vr"><svg><use href="#wcs"/><use href="#bP"/></svg></span>
    <span class="vr"><svg><use href="#wfs"/><use href="#vv"/><use href="#bP"/></svg><span class="dd"></span></span>
    <span class="vr"><svg><use href="#vv"/><use href="#bS"/></svg><span class="dd"></span></span>
  </aside>

  <section class="left">
    <div class="dock-title"><span>浏览</span><span class="dock-btns"><svg><use href="#fl"/></svg><svg><use href="#cl"/></svg></span></div>
    <div class="dock-tools tools-browser">
      <svg><use href="#newc"/></svg><svg><use href="#refresh"/></svg><svg><use href="#funnel"/></svg><svg><use href="#coll"/></svg><svg><use href="#info"/></svg>
    </div>
    <div class="tree tree-browser">
      <div class="rows">
        <div class="tr"><span class="ex"></span><svg class="ti"><rect x="1" y="1" width="18" height="18" rx="3" fill="#6f9cd0"/><text x="10" y="13" class="ic-db">DB2</text></svg><span>DB2</span></div>
        <div class="tr"><span class="ex"></span><svg class="ti"><use href="#globe"/></svg><span>WMS/WMTS</span></div>
        <div class="tr"><span class="ex open"></span><svg class="ti"><use href="#globe"/></svg><span>XYZ Tiles</span></div>
        <div class="tr child"><svg class="ti"><use href="#xyz"/></svg><span>google地图</span></div>
        <div class="tr child"><svg class="ti"><use href="#xyz"/></svg><span>OpenStreetMap</span></div>
        <div class="tr child"><svg class="ti"><use href="#xyz"/></svg><span>谷歌</span></div>
        <div class="tr child"><svg class="ti"><use href="#xyz"/></svg><span>高德地图</span></div>
        <div class="tr"><span class="ex"></span><svg class="ti"><use href="#wcs"/></svg><span>WCS</span></div>
        <div class="tr"><span class="ex shut"></span><svg class="ti"><use href="#wfs"/><use href="#vv"/></svg><span>WFS</span></div>
        <div class="tr"><span class="ex shut"></span><svg class="ti"><use href="#wfs"/></svg><span>OWS</span></div>
      </div>
      <div class="vs">
        <span class="ar up"></span><span class="trk t1"></span><span class="thumb t2"></span><span class="trk t3"></span><span class="ar down"></span>
      </div>
    </div>
    <div class="split-h"><span class="hgrip"></span></div>

    <div class="dock-title"><span>空间书签</span><span class="dock-btns"><svg><use href="#fl"/></svg><svg><use href="#cl"/></svg></span></div>
    <div class="dock-tools tools-bm">
      <svg><use href="#zoomb"/></svg><svg><use href="#book"/><use href="#bS"/></svg><svg><use href="#rtrash"/></svg><svg><use href="#share"/></svg>
    </div>
    <div class="bmtable">
      <div class="thead"><span class="th th1">名称<span class="sort"></span></span><span class="th">项目</span></div>
      <div class="bmrows">
        <div class="bmr"><span class="c1">Europe</span><span class="c2">beijing_test.qgs</span></div>
        <div class="bmr alt1"><span class="c1">wgs84_europe</span></div>
        <div class="bmr alt2"><span class="c1">北京</span></div>
      </div>
      <div class="hs"><span class="ar left"></span><span class="thumb hthumb"></span><span class="trk grow"></span><span class="ar right"></span></div>
    </div>
    <div class="split-h split-layers"><span class="hgrip"></span></div>

    <div class="dock-title"><span>图层</span><span class="dock-btns"><svg><use href="#fl"/></svg><svg><use href="#cl"/></svg></span></div>
    <div class="dock-tools tools-lay">
      <svg><use href="#brush"/></svg><svg><use href="#addg"/></svg><svg><use href="#vis"/></svg><svg><use href="#funnel"/></svg><svg><use href="#expr"/></svg><span class="dd"></span><svg><use href="#expa"/></svg><svg><use href="#coll"/></svg><svg><use href="#remc"/></svg>
    </div>
    <div class="tree tree-layers">
      <div class="rows">
        <div class="lr bold"><span class="ex"></span><span class="cb"><svg><use href="#tick"/></svg></span><svg class="li"><use href="#beij"/></svg><span>beijing</span></div>
        <div class="lr off"><span class="ex"></span><span class="cb"></span><span class="swatch s-yellow"></span><span class="txt">多边形</span><svg class="mc"><use href="#mchip"/></svg></div>
        <div class="lr off"><span class="ex"></span><span class="cb"></span><span class="swline s-green"></span><span class="txt">路径</span><svg class="mc"><use href="#mchip"/></svg></div>
        <div class="lr off"><span class="ex"></span><span class="cb"></span><svg class="li"><use href="#flagi"/></svg><span class="txt">flag3</span></div>
        <div class="lr off"><span class="ex"></span><span class="cb"></span><svg class="li"><circle cx="9" cy="9" r="5" fill="#7d4f96" stroke="#5a3570"/></svg><span class="txt">flag</span></div>
        <div class="lr off"><span class="ex"></span><span class="cb"></span><span class="swline s-pink"></span><span class="txt">路径</span><svg class="mc"><use href="#mchip"/></svg></div>
        <div class="lr bold"><span class="ex shut"></span><span class="cb"><svg><use href="#tick"/></svg></span><svg class="li"><use href="#pts"/></svg><span>等级景区</span></div>
        <div class="lr off"><span class="ex"></span><span class="cb"></span><svg class="li"><use href="#xyz"/></svg><span class="txt clip">北京市基础地理底图(...</span></div>
        <div class="lr bold"><span class="ex open"></span><span class="cb"><svg><use href="#tick"/></svg></span><svg class="li"><use href="#xyz"/></svg><span>谷歌</span></div>
        <div class="lr off"><span class="ex open"></span><span class="cb"></span><span class="swatch s-gold"></span><span class="txt">Polygons from li...</span><svg class="mc"><use href="#mchip"/></svg></div>
      </div>
      <div class="vs">
        <span class="ar up"></span><span class="trk t4"></span><span class="thumb t5"></span><span class="trk t6"></span><span class="ar down"></span>
      </div>
    </div>
  </section>

  <section class="center">
    <div class="map">
<svg class="map-canvas" viewBox="290 197 1282 440">
<g class="pts">
<circle class="pd" cx="1129" cy="201" r="9"/><circle class="pd" cx="1084" cy="234" r="9"/><circle class="pb" cx="1169" cy="217" r="4.600"/><circle class="pc" cx="1393" cy="216" r="7"/><circle class="pc" cx="1342" cy="249" r="7"/><circle class="pd" cx="1210" cy="295" r="9"/>
<circle class="pb" cx="476" cy="281" r="4.600"/><circle class="pa" cx="526" cy="303" r="4.800"/><circle class="pb" cx="433" cy="332" r="4.600"/><circle class="pb" cx="480" cy="348" r="4.600"/><circle class="pc" cx="593" cy="330" r="7"/><circle class="pc" cx="588" cy="327" r="7"/><circle class="pc" cx="628" cy="332" r="7"/><circle class="pb" cx="655" cy="245" r="4.600"/><circle class="pc" cx="845" cy="260" r="7"/><circle class="pc" cx="531" cy="421" r="7"/><circle class="pd" cx="629" cy="422" r="9"/><circle class="pc" cx="546" cy="442" r="7"/><circle class="pb" cx="534" cy="461" r="4.600"/><circle class="pb" cx="751" cy="446" r="4.600"/><circle class="pd" cx="786" cy="450" r="9"/><circle class="pc" cx="883" cy="451" r="7"/><circle class="pc" cx="873" cy="447" r="7"/><circle class="pc" cx="881" cy="456" r="7"/><circle class="pd" cx="846" cy="375" r="9"/><circle class="pd" cx="775" cy="524" r="9"/><circle class="pc" cx="694" cy="539" r="7"/><circle class="pc" cx="656" cy="544" r="7"/><circle class="pd" cx="536" cy="564" r="9"/><circle class="pd" cx="667" cy="582" r="9"/><circle class="pa" cx="625" cy="611" r="4.800"/><circle class="pb" cx="696" cy="623" r="4.600"/><circle class="pc" cx="796" cy="588" r="7"/><circle class="pa" cx="864" cy="576" r="4.800"/><circle class="pb" cx="883" cy="535" r="4.600"/><circle class="pb" cx="911" cy="557" r="4.600"/><circle class="pc" cx="1279" cy="545" r="7"/><circle class="pc" cx="1226" cy="521" r="7"/><circle class="pb" cx="1206" cy="563" r="4.600"/><circle class="pc" cx="1145" cy="463" r="7"/>
<circle class="pc" cx="834" cy="214" r="7"/><circle class="pd" cx="890" cy="232" r="9"/><circle class="pb" cx="898" cy="271" r="4.600"/><circle class="pc" cx="895" cy="262" r="7"/><circle class="pb" cx="921" cy="273" r="4.600"/><circle class="pc" cx="1002" cy="288" r="7"/><circle class="pd" cx="1041" cy="304" r="9"/><circle class="pd" cx="973" cy="311" r="9"/><circle class="pd" cx="959" cy="313" r="9"/><circle class="pd" cx="952" cy="336" r="9"/><circle class="pe" cx="1018" cy="314" r="11"/><circle class="pc" cx="1002" cy="359" r="7"/><circle class="pd" cx="970" cy="368" r="9"/><circle class="pd" cx="884" cy="398" r="9"/><circle class="pd" cx="907" cy="406" r="9"/><circle class="pd" cx="982" cy="411" r="9"/><circle class="pd" cx="1027" cy="440" r="9"/><circle class="pd" cx="929" cy="452" r="9"/><circle class="pc" cx="1031" cy="460" r="7"/><circle class="pb" cx="1056" cy="488" r="4.600"/><circle class="pd" cx="1071" cy="423" r="9"/><circle class="pb" cx="1045" cy="383" r="4.600"/><circle class="pb" cx="1088" cy="407" r="4.600"/>
<circle class="pd" cx="1103" cy="304" r="9"/><circle class="pd" cx="1098" cy="318" r="9"/><circle class="pd" cx="1103" cy="324" r="9"/><circle class="pb" cx="1076" cy="330" r="4.600"/>
<circle class="pd" cx="1090" cy="343" r="9"/><circle class="pd" cx="1089" cy="346" r="9"/><circle class="pd" cx="1061" cy="350" r="9"/><circle class="pd" cx="1062" cy="347" r="9"/><circle class="pd" cx="1047" cy="348" r="9"/><circle class="pd" cx="1037" cy="365" r="9"/><circle class="pd" cx="1044" cy="365" r="9"/><circle class="pc" cx="1072" cy="367" r="7"/><circle class="pd" cx="1063" cy="373" r="9"/><circle class="pc" cx="1083" cy="362" r="7"/><circle class="pc" cx="1125" cy="355" r="7"/><circle class="pc" cx="1142" cy="353" r="7"/><circle class="pc" cx="1156" cy="343" r="7"/><circle class="pc" cx="1169" cy="358" r="7"/><circle class="pc" cx="1152" cy="360" r="7"/><circle class="pc" cx="1134" cy="365" r="7"/><circle class="pd" cx="1159" cy="351" r="9"/><circle class="pd" cx="1115" cy="345" r="9"/><circle class="pe" cx="1095" cy="352" r="11"/><circle class="pd" cx="1123" cy="377" r="9"/><circle class="pd" cx="1192" cy="370" r="9"/><circle class="pc" cx="1073" cy="382" r="7"/><circle class="pc" cx="1078" cy="383" r="7"/><circle class="pc" cx="1073" cy="398" r="7"/><circle class="pd" cx="1132" cy="392" r="9"/><circle class="pe" cx="1114" cy="392" r="11"/><circle class="pd" cx="1092" cy="395" r="9"/><circle class="pd" cx="1171" cy="401" r="9"/><circle class="pc" cx="1319" cy="380" r="7"/><circle class="pc" cx="1298" cy="395" r="7"/>
<circle class="pf" cx="1088" cy="375" r="11"/><circle class="pf" cx="1093" cy="375" r="11"/><circle class="pf" cx="1098" cy="375" r="11"/><circle class="pf" cx="1103" cy="375" r="11"/><circle class="pf" cx="1105" cy="376" r="11"/><circle class="pf" cx="1100" cy="377" r="11"/><circle class="pf" cx="1094" cy="377" r="11"/><circle class="pf" cx="1089" cy="376" r="11"/>
</g>
<rect class="centre-box" x="1087" y="373" width="18" height="4"/>
<g class="labels">
<text x="481" y="274">灵山风景区</text><text x="529" y="296">龙门涧风景旅游区</text><text x="438" y="325">小龙门森林公园</text><text x="468" y="341">百花山自然风景区</text><text x="532" y="322">鬓柏景区</text><text x="633" y="326">北京双龙峡自然风景区</text><text x="597" y="341">黄芩仙谷景区</text><text x="659" y="239">珍珠湖风景区</text><text x="755" y="252">妙峰山风景名胜区</text><text x="474" y="413">北京百花山旅游景区</text><text x="635" y="416">圣莲山旅游度假区</text><text x="553" y="445">白草畔自然风景区</text><text x="539" y="464">没有共产党就没有新中国纪念馆</text><text x="718" y="438">银狐洞</text><text x="761" y="439">北京京辉高尔夫俱乐部</text><text x="794" y="454">石花洞</text><text x="791" y="471">青龙湖水上游乐园</text><text x="842" y="366">潭柘寺</text><text x="889" y="392">戒台寺</text><text x="799" y="418">北宫国家森林公园</text><text x="780" y="518">周口店遗址博物馆</text><text x="636" y="530">上方山国家森林公园</text><text x="662" y="556">仙栖洞景区</text><text x="523" y="556">北京十渡风景名胜区</text><text x="672" y="575">云居寺</text><text x="629" y="604">张坊古战道</text><text x="700" y="616">中华石雕艺术园</text><text x="789" y="580">韩村河景区</text><text x="870" y="580">西周燕都遗址博物馆</text><text x="888" y="527">北京提香高尔夫俱乐部</text><text x="839" y="208">北京棋盘山风景区</text><text x="895" y="226">凤凰岭自然风景区</text><text x="887" y="254">鹫峰森林公园</text><text x="865" y="285">大觉寺</text><text x="926" y="267">北京汇通诺尔狂飚乐园</text><text x="1007" y="282">百望山森林公园</text><text x="997" y="297">圆明园遗址公园</text><text x="905" y="302">北京市植物园</text><text x="903" y="317">香山公园</text><text x="884" y="330">八大处公园</text><text x="1022" y="325">颐和园</text><text x="1005" y="341">北京动物园</text><text x="870" y="352">北京龙徽葡萄酒博物馆</text><text x="888" y="371">石景山游乐园</text><text x="989" y="377">北京月坛公园</text><text x="976" y="394">莲花池公园</text><text x="1025" y="409">陶然亭公园</text><text x="904" y="428">抗日战争雕塑园</text><text x="1002" y="432">世界公园</text><text x="935" y="447">南宫旅游景区</text><text x="1038" y="447">大葆台西汉墓博物馆</text><text x="1037" y="463">中华文化园</text><text x="1061" y="480">中国印刷博物馆</text><text x="1078" y="427">世界花卉大观园</text><text x="1089" y="227">温都水城</text><text x="1173" y="210">春晖温泉度假村</text><text x="1398" y="210">北京顺义汉石桥湿地景区</text><text x="1347" y="243">北京顺鑫绿色度假村</text><text x="1215" y="288">蟹岛绿色生态农庄</text><text x="1108" y="297">中国科学技术馆</text><text x="1067" y="310">中华民族园</text><text x="1101" y="345">恭王府</text><text x="1162" y="336">北京蓝色港湾</text><text x="1173" y="352">红领巾公园</text><text x="1199" y="365">中国紫檀博物馆</text><text x="1110" y="363">景山公园</text><text x="1140" y="378">日坛公园</text><text x="1110" y="391">北京市规划展览馆</text><text x="1107" y="407">龙潭公园</text><text x="1178" y="405">北京欢乐谷</text><text x="1324" y="373">通州运河公园</text><text x="1305" y="398">北京韩美林艺术馆</text><text x="916" y="550">富恒农业观光园</text><text x="1283" y="538">采育葡萄大世界观光采摘园</text><text x="1230" y="513">留民营生态农场</text><text x="1198" y="556">御林古桑园</text><text x="1151" y="467">麋鹿苑</text>
</g>
</svg>
    </div>
    <div class="split-h center-split"><span class="hgrip"></span></div>
    <div class="dock-title console-title"><span class="python-t">Python控制台</span><span class="dock-btns"><svg><use href="#fl"/></svg><svg><use href="#cl"/></svg></span></div>
    <div class="dock-tools tools-py">
      <svg><use href="#broom"/></svg><svg><use href="#pyd"/></svg><span class="sep"></span><svg><use href="#edit"/></svg><span class="sep"></span><svg><use href="#wrench"/></svg><svg><use href="#help"/></svg>
    </div>
    <div class="editor">
      <div class="gutter"><div>1</div><div>2</div><div>3</div><div>4</div></div>
      <div class="code">
        <div class="ln">Python Console</div>
        <div class="ln">Use iface to access QGIS API interface <span class="kw">or</span> Type help(iface) <span class="kw">for</span> more info</div>
        <div class="ln">Security warning: typing commands <span class="kw">from</span> an untrusted source can lead to data loss <span class="kw">and</span>/<span class="kw">or</span> leak</div>
        <div class="ln"></div>
      </div>
    </div>
    <div class="prompt">&gt;&gt;&gt;</div>
  </section>

  <aside class="right">
    <div class="dock-title right-title"><span>处理工具箱</span></div>
    <div class="dock-tools tools-proc">
      <svg><use href="#hammer"/></svg><svg><use href="#pyd"/></svg><svg><use href="#clk"/></svg><svg><use href="#doc"/></svg><span class="sep"></span><svg><use href="#note"/></svg><span class="sep"></span><svg><use href="#wrench"/></svg>
    </div>
    <div class="search"><svg class="mag"><use href="#mag"/></svg><span>搜索...</span></div>
    <div class="proc-list">
      <div class="pr"><svg><use href="#gear"/></svg><span>边界</span></div>
      <div class="pr"><svg><use href="#gear"/></svg><span>边界框</span></div>
      <div class="pr"><svg><use href="#gear"/></svg><span>从范围创建图层</span></div>
      <div class="pr"><svg><use href="#gear"/></svg><span>单边缓冲区</span></div>
      <div class="pr"><svg><use href="#delaunay"/></svg><span>德洛内三角剖分</span></div>
      <div class="pr"><svg><use href="#gear"/></svg><span>点的位移</span></div>
      <div class="pr"><svg><use href="#gear"/></svg><span>点吸附到网格</span></div>
      <div class="pr"><svg><use href="#gear"/></svg><span>定向最小边界框</span></div>
    </div>
    <div class="split-h"><span class="hgrip"></span></div>
    <div class="dock-title right-title identify-title"><span>识别结果</span></div>
    <div class="dock-tools tools-id">
      <svg><use href="#exp2"/></svg><span class="sep"></span><svg><use href="#expa"/></svg><svg><use href="#coll"/></svg><svg><use href="#starx"/></svg><span class="sep"></span><svg><use href="#ycl"/></svg><span class="sep"></span><svg><use href="#copy"/></svg><svg><use href="#prn"/></svg><svg><use href="#idsel"/></svg><span class="dd"></span>
    </div>
    <div class="idtree">
      <div class="idhead">要素</div>
      <div class="idrows">
        <div class="ir d0"><span class="ex open"></span><span>路径</span></div>
        <div class="ir d1 zebra"><span class="ex open"></span><span>fid</span></div>
        <div class="ir d2"><span class="ex shut"></span><span>(派生)</span></div>
        <div class="ir d2 zebra2"><span class="ex shut"></span><span>(动作)</span></div>
        <div class="ir d3"><span>fid</span></div>
        <div class="ir d3 zebra2"><span>begin</span></div>
        <div class="ir d3"><span>end</span></div>
      </div>
      <div class="hs idscroll"><span class="ar left"></span><span class="thumb grow"></span></div>
    </div>
    <div class="mode-row"><span class="mode-l">模式</span><span class="combo mode-c">当前图层<span class="dd"></span></span><span class="cb"><svg><use href="#tick"/></svg></span></div>
    <div class="mode-row view-row"><span class="mode-l">视图</span><span class="combo view-c">树形图<span class="dd off"></span></span></div>
  </aside>
</main>
</div>
</body>
</html>
```

FILE: styles.css
```css
* { box-sizing: border-box; }
html, body { margin: 0; padding: 0; height: 100%; overflow: hidden; }
body { font: 12.5px/1.2 "Noto Sans", "Noto Sans CJK SC", sans-serif; color: #111; background: #f0f0f0; }
.defs { position: absolute; width: 0; height: 0; }
svg { display: block; overflow: hidden; }
.ic-t { font: 11px "Liberation Sans", sans-serif; fill: #444; }
.ic-i { font: italic bold 17px "Liberation Serif", serif; fill: #fff; text-anchor: middle; }
.ic-T { font: 14px "Liberation Serif", serif; fill: #333; text-anchor: middle; }
.ic-l { font: 8px "Liberation Serif", serif; fill: #333; text-anchor: middle; }
.ic-q { font: bold 11px "Liberation Sans", sans-serif; fill: #e8eef6; text-anchor: middle; }
.ic-e { font: 17px "Liberation Serif", serif; fill: #7d4f96; }
.ic-db { font: bold 6px "Liberation Sans", sans-serif; fill: #cfe0f2; text-anchor: middle; }
.ic-11 { font: bold 8px "Liberation Sans", sans-serif; fill: #888; text-anchor: middle; }

.app { width: 1813px; height: 997px; display: flex; flex-direction: column; }

.titlebar { height: 18px; background: #fff; display: flex; align-items: flex-start; position: relative; overflow: hidden; }
.logo { width: 13px; height: 13px; margin-left: -3px; flex: none; }
.title-text { margin-left: 5px; font-size: 13.5px; line-height: 14px; color: #808080; }
.win-min { margin-left: auto; margin-right: 12px; margin-top: 6px; width: 11px; height: 1px; background: #666; }

.menubar { height: 21px; display: flex; align-items: center; padding-left: 3px; gap: 14.600px; font-size: 12.5px; color: #8a8a8a; background: #f0f0f0; border-bottom: 1px solid #bdbdbd; white-space: nowrap; }

.toolbar { height: 39px; flex: none; display: flex; align-items: center; padding-left: 6.400px; background: linear-gradient(#fbfbfb, #f0f0f0); border-bottom: 1px solid #bdbdbd; white-space: nowrap; }
.b { width: 33.200px; height: 32px; flex: none; display: flex; align-items: center; justify-content: center; border: 1px solid transparent; border-radius: 3px; }
.b svg { width: 24px; height: 24px; flex: none; }
.b.on { background: #dedede; border-color: #adadad; }
.b.narrow { width: 29px; }
.g { width: 17px; height: 22px; flex: none; background-image: radial-gradient(circle, #a8a8a8 .6px, transparent .9px), radial-gradient(circle, #a8a8a8 .6px, transparent .9px); background-size: 3px 3px, 3px 3px; background-position: 6px 0, 9px 0; background-repeat: repeat-y; }
.dd { width: 14.500px; height: 10px; flex: none; position: relative; }
.dd::after { content: ""; position: absolute; left: 3px; top: 2px; border-left: 4.500px solid transparent; border-right: 4.500px solid transparent; border-top: 5.500px solid #555; }
.dd.off::after { border-top-color: #aaa; }
.dd.sub { width: 13px; margin-left: -10px; margin-top: 14px; }
.snapping { margin-left: auto; margin-right: 150px; display: flex; align-items: center; }
.spin { width: 84px; height: 20px; margin-left: 3px; display: flex; background: #fff; border: 1px solid #aaa; border-radius: 3px; font-size: 11.5px; line-height: 18px; }
.spin-val { flex: 1; padding-left: 4px; }
.spin-btns { width: 16px; border-left: 1px solid #bbb; display: flex; flex-direction: column; align-items: center; justify-content: center; gap: 2px; }
.tri-up { border-left: 4px solid transparent; border-right: 4px solid transparent; border-bottom: 5px solid #444; }
.tri-down { border-left: 4px solid transparent; border-right: 4px solid transparent; border-top: 5px solid #444; }
.combo { display: flex; align-items: center; justify-content: space-between; background: linear-gradient(#fff, #f4f4f4); border: 1px solid #aaa; border-radius: 3px; padding-left: 4px; flex: none; }
.unit { width: 61px; height: 23px; margin-left: 1px; }

.workspace { flex: 1; display: flex; min-height: 0; }

.vbar { width: 47px; flex: none; background: linear-gradient(90deg, #fafafa, #f0f0f0); border-right: 1px solid #c8c8c8; padding-top: 6px; display: flex; flex-direction: column; }
.hgrip { display: block; height: 6px; width: 22px; margin: 0 auto; background-image: radial-gradient(circle, #aaa .6px, transparent .9px); background-size: 3px 3px; }
.vbar > .hgrip { margin-bottom: 3px; }
.vr { height: 32.100px; flex: none; display: flex; align-items: center; padding-left: 1px; }
.vr svg { width: 24px; height: 24px; flex: none; }
.vr .dd { margin-left: 6px; }

.left { width: 238px; flex: none; display: flex; flex-direction: column; padding: 0 3px 0 1px; }
.dock-title { height: 20px; flex: none; display: flex; align-items: center; justify-content: space-between; padding: 0 0 0 3px; color: #111; font-size: 12.5px; }
.dock-btns { display: flex; gap: 2px; margin-right: 2px; }
.dock-btns svg { width: 12px; height: 12px; }
.dock-tools { flex: none; display: flex; align-items: center; }
.dock-tools svg { width: 18px; height: 18px; flex: none; }
.dock-tools .dd { margin-left: -2px; width: 12px; }
.tools-browser { height: 32px; padding-left: 5px; gap: 7.200px; }
.tools-bm { height: 31px; padding-left: 6px; gap: 7px; }
.tools-lay { height: 32px; padding-left: 6px; gap: 7px; }
.sep { width: 1px; height: 16px; background: #cfcfcf; flex: none; }

.tree { display: flex; background: #fff; border: 1px solid #b4b4b4; flex: none; overflow: hidden; }
.rows { flex: 1; min-width: 0; overflow: hidden; }
.tree-browser { height: 214px; }
.tree-layers { height: 212px; border-bottom: 0; }
.tr { height: 22px; display: flex; align-items: center; padding-left: 6px; white-space: nowrap; }
.tr span:last-child { margin-left: 6px; font-size: 12.600px; }
.tr.child { padding-left: 53px; }
.ex { width: 16px; height: 12px; flex: none; margin-right: 5px; position: relative; }
.ex.open::after { content: ""; position: absolute; left: 2px; top: 3px; border-left: 5px solid transparent; border-right: 5px solid transparent; border-top: 5px solid #555; }
.ex.shut::after { content: ""; position: absolute; left: 4px; top: 1px; border-top: 5px solid transparent; border-bottom: 5px solid transparent; border-left: 5px solid #555; }
.ti { width: 20px; height: 20px; flex: none; }

.vs { width: 18px; flex: none; display: flex; flex-direction: column; border-left: 1px solid #c8c8c8; background: #e6e6e6; }
.ar { display: block; flex: none; position: relative; background: #fff; }
.vs .ar { height: 16px; }
.ar.up::after { content: ""; position: absolute; left: 3px; top: 5px; border-left: 5px solid transparent; border-right: 5px solid transparent; border-bottom: 5px solid #555; }
.ar.down::after { content: ""; position: absolute; left: 3px; top: 5px; border-left: 5px solid transparent; border-right: 5px solid transparent; border-top: 5px solid #555; }
.trk { display: block; background: #e6e6e6; flex: none; border-top: 1px solid #d4d4d4; border-bottom: 1px solid #d4d4d4; }
.thumb { display: block; flex: none; background: linear-gradient(90deg, #fff, #fbfbfb); }
.t1 { height: 88px; } .t2 { height: 64px; } .t3 { flex: 1; }
.t4 { height: 72px; } .t5 { height: 63px; } .t6 { flex: 1; }

.split-h { height: 7px; flex: none; display: flex; align-items: center; }
.split-h .hgrip { height: 3px; width: 16px; }
.split-layers { height: 6px; }

.bmtable { height: 210px; flex: none; display: flex; flex-direction: column; background: #fff; border: 1px solid #b4b4b4; }
.thead { height: 21px; flex: none; display: flex; background: linear-gradient(#fff, #f0f0f0); border-bottom: 1px solid #bbb; font-size: 12.500px; }
.th { padding-left: 2px; display: flex; align-items: center; }
.th1 { width: 149px; border-right: 1px solid #ccc; justify-content: space-between; padding-right: 4px; }
.sort { border-left: 5px solid transparent; border-right: 5px solid transparent; border-bottom: 5px solid #555; }
.bmrows { flex: 1; overflow: hidden; font-size: 12.600px; }
.bmr { height: 17px; display: flex; align-items: center; white-space: nowrap; overflow: hidden; }
.c1 { width: 152px; flex: none; padding-left: 3px; }
.alt1 { background: #e8e6e3; }
.alt2 { background: #efeeec; }
.hs { height: 18px; flex: none; display: flex; border-top: 1px solid #c8c8c8; background: #e6e6e6; }
.hs .ar { width: 16px; }
.ar.left::after { content: ""; position: absolute; left: 4px; top: 3px; border-top: 5px solid transparent; border-bottom: 5px solid transparent; border-right: 5px solid #555; }
.ar.right::after { content: ""; position: absolute; left: 6px; top: 3px; border-top: 5px solid transparent; border-bottom: 5px solid transparent; border-left: 5px solid #555; }
.hthumb { width: 39px; border-right: 1px solid #ccc; border-left: 1px solid #ccc; }
.grow { flex: 1; }
.hs .trk { border: 0; }

.lr { height: 20.650px; display: flex; align-items: center; padding-left: 5px; white-space: nowrap; font-size: 12.500px; }
.lr .ex { margin-right: 6px; }
.lr.bold { font-weight: 700; }
.lr.off { color: #bdbdbd; font-weight: 700; }
.cb { width: 17px; height: 17px; flex: none; background: #fff; border: 1px solid #aaa; display: block; }
.cb svg { width: 15px; height: 15px; }
.li { width: 18px; height: 18px; flex: none; margin: 0 4px 0 6px; }
.swatch { width: 18px; height: 18px; flex: none; margin: 0 5px 0 6px; border: 1px solid #999; }
.s-yellow { background: #f5fbb4; border-color: #b5b98a; }
.s-gold { background: #e4b02e; border-color: #444; }
.swline { width: 18px; height: 1px; flex: none; margin: 0 5px 0 6px; }
.s-green { background: #b9cf5a; }
.s-pink { background: #ef6f8d; }
.mc { width: 16px; height: 16px; margin-left: auto; margin-right: 1px; flex: none; }
.txt { overflow: hidden; }

.center { width: 1284px; margin-left: 4px; flex: none; display: flex; flex-direction: column; min-width: 0; }
.map { height: 442px; margin-top: 1px; flex: none; background: #fff; border: 1px solid #b4b4b4; overflow: hidden; }
.map-canvas { width: 1282px; height: 440px; }
.pts circle { stroke: #2f5f90; stroke-width: 1.700; }
.pa { fill: #2b7bba; }
.pb { fill: #8fc8a6; }
.pc { fill: #def2ae; }
.pd { fill: #ffd992; }
.pe { fill: #f78f50; }
.pts .pf { fill: #d7191c; stroke: #9c1020; }
.centre-box { fill: #e0622a; opacity: .8; }
.labels text { font: 12.700px "Noto Sans CJK SC", sans-serif; fill: #3a3a3a; font-weight: 300; paint-order: stroke; stroke: rgba(255, 255, 255, .45); stroke-width: 1px; }

.center-split { height: 6px; }
.console-title { height: 21px; padding-left: 4px; }
.console-title .dock-btns { margin-right: 1px; }
.tools-py { height: 38px; padding: 0 0 8px 7px; gap: 7px; }
.editor { height: 234px; flex: none; display: flex; background: #fff; border: 1px solid #b4b4b4; font: 11.500px/17px "Liberation Mono", monospace; color: #4a4a4a; }
.gutter { width: 36px; flex: none; background: #efefef; text-align: right; padding-right: 3px; color: #555; }
.code { flex: 1; padding-left: 1px; }
.ln { height: 17px; white-space: pre; }
.kw { color: #7b3fa0; }
.prompt { flex: 1; margin-top: 4px; background: #fff; border: 1px solid #b4b4b4; border-bottom: 0; padding: 1px 2px; font: 11.500px/17px "Liberation Mono", monospace; color: #333; }

.right { width: 233px; margin-left: 7px; flex: none; display: flex; flex-direction: column; padding-left: 1px; overflow: hidden; }
.right-title { padding-left: 3px; }
.tools-proc { height: 32px; padding: 0 0 2px 6px; gap: 7px; }
.tools-proc svg { width: 17px; height: 17px; }
.search { height: 21px; flex: none; display: flex; align-items: center; gap: 6px; background: #fff; border: 1px solid #b4b4b4; border-right: 0; border-radius: 3px 0 0 3px; padding-left: 6px; color: #888; font-size: 12.500px; }
.mag { width: 14px; height: 14px; }
.proc-list { height: 178px; flex: none; background: #fff; border: 1px solid #b4b4b4; border-right: 0; overflow: hidden; }
.pr { height: 22px; display: flex; align-items: center; padding-left: 53px; gap: 7px; white-space: nowrap; }
.pr svg { width: 18px; height: 18px; }
.identify-title { margin-top: 1px; }
.tools-id { height: 31px; padding: 0 0 3px 7px; gap: 7px; white-space: nowrap; }
.tools-id svg { width: 18px; height: 18px; }
.idtree { height: 431px; flex: none; display: flex; flex-direction: column; background: #fff; border: 1px solid #b4b4b4; border-right: 0; }
.idhead { height: 22px; flex: none; background: linear-gradient(#fff, #f0f0f0); border-bottom: 1px solid #bbb; padding-left: 2px; font-size: 13px; line-height: 21px; }
.idrows { flex: 1; font-size: 15px; }
.ir { height: 20px; display: flex; align-items: center; white-space: nowrap; }
.ir .ex { margin-right: 4px; }
.d0 { padding-left: 6px; }
.d1 { padding-left: 30px; }
.d2 { padding-left: 54px; }
.ir.d2 .ex { margin-right: 16px; }
.d3 { padding-left: 78px; }
.zebra { background: #f0f0f0; }
.zebra2 { background: #e8e6e3; }
.idscroll { height: 16px; background: #fff; }
.idscroll .ar { border-right: 1px solid #ccc; }
.mode-row { flex: none; height: 21px; margin-top: 7px; display: flex; align-items: center; padding-left: 4px; }
.mode-l { width: 36px; flex: none; }
.mode-c { width: 159px; height: 21px; background: #fbfbfb; }
.mode-row > .cb { margin-left: 8px; }
.view-row { margin-top: 9px; color: #888; }
.view-c { width: 89px; height: 21px; background: #f5f5f5; color: #888; }
.combo .dd { width: 20px; }
.combo .dd::after { left: 4px; }
.tools-id .dd { width: 12px; margin-left: -4px; }
```
